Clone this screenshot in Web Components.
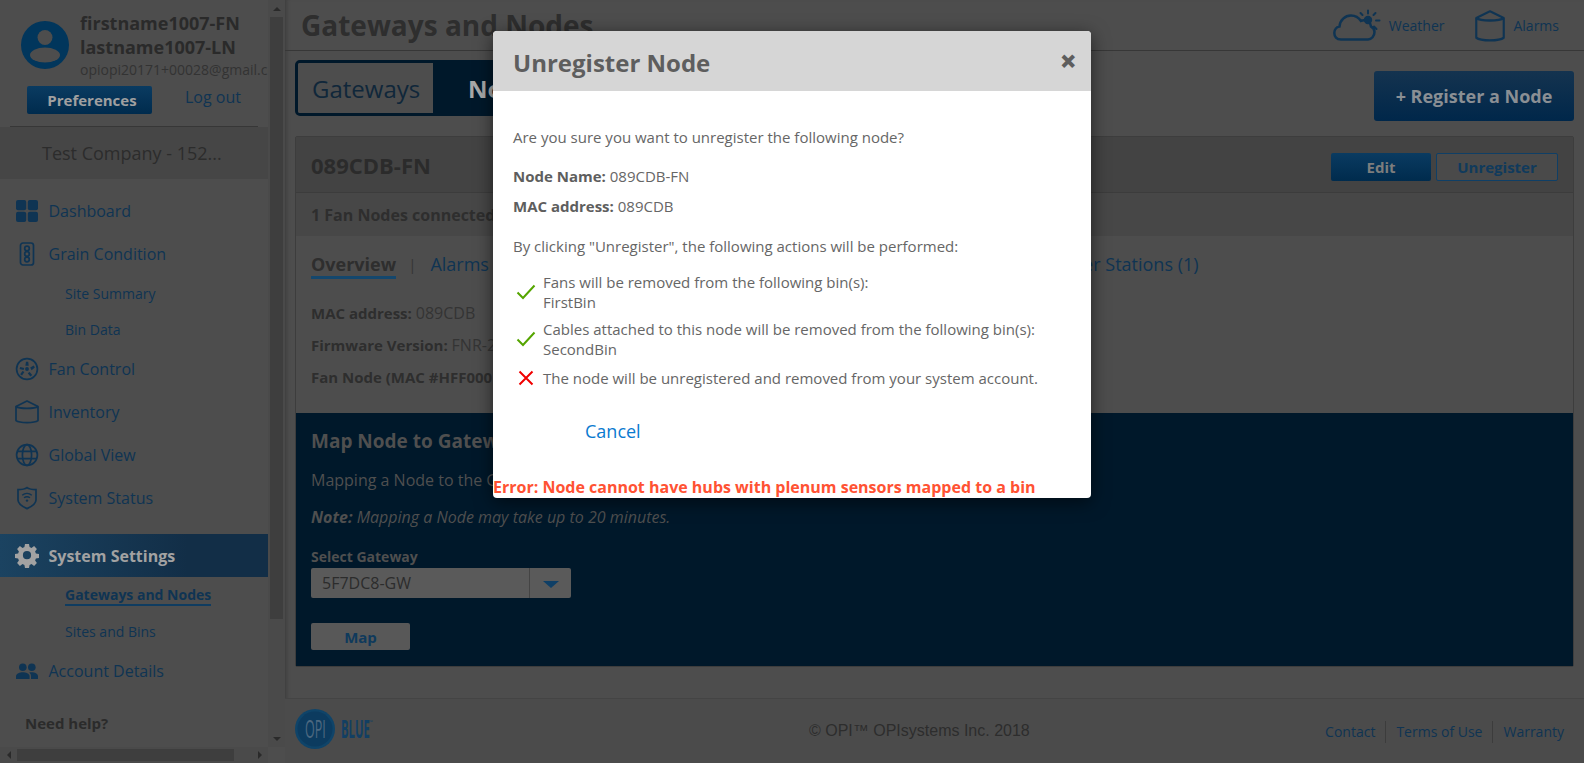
<!DOCTYPE html>
<html>
<head>
<meta charset="utf-8">
<title>Gateways and Nodes</title>
<style>
	html, body { margin: 0; height: 100%; overflow: hidden; background: #4d4d4d; font-family: "Open Sans", "Liberation Sans", sans-serif; }
</style>
</head>
<body>
<page-shell></page-shell>
<script>
const ICONS = {
	dashboard: `<svg width="24" height="24" viewBox="0 0 24 24" fill="currentColor"><rect x="1" y="1" width="10.2" height="10.2" rx="2"/><rect x="12.8" y="1" width="10.2" height="10.2" rx="2"/><rect x="1" y="12.8" width="10.2" height="10.2" rx="2"/><rect x="12.8" y="12.8" width="10.2" height="10.2" rx="2"/></svg>`,
	grain: `<svg width="24" height="24" viewBox="0 0 24 24" fill="none" stroke="currentColor" stroke-width="1.7"><rect x="5.5" y="1" width="13" height="22" rx="2.5"/><circle cx="12" cy="6.5" r="2.3"/><circle cx="12" cy="12" r="2.3"/><circle cx="12" cy="17.5" r="2.3"/></svg>`,
	fan: `<svg width="24" height="24" viewBox="0 0 24 24" fill="currentColor"><circle cx="12" cy="12" r="10.4" fill="none" stroke="currentColor" stroke-width="1.7"/><circle cx="12" cy="12" r="1.9"/><path d="M10.4 8.8 11 4.8h2.2l.5 4zM15.2 10.4l3.6-1.8 1 2-3.2 2.6zM14.6 15l2.6 3.1-1.8 1.3-2.6-3.2zM9.4 15.1l-2.4 3.4-1.8-1.3 2.3-3.3zM8.6 13.1l-4-1 .6-2.1 4 1.1z"/></svg>`,
	bin: `<svg width="24" height="24" viewBox="0 0 24 24" fill="none" stroke="currentColor" stroke-width="1.7" stroke-linejoin="round"><path d="M1 6.500 12 1 23 6.500V20.600C19.500 23.200 4.500 23.200 1 20.600z"/><path d="M1 6.500C4.500 9 19.500 9 23 6.500"/></svg>`,
	globe: `<svg width="24" height="24" viewBox="0 0 24 24" fill="none" stroke="currentColor" stroke-width="1.7"><circle cx="12" cy="12" r="10.4"/><ellipse cx="12" cy="12" rx="4.6" ry="10.4"/><path d="M2.4 8.4h19.2M2.4 15.6h19.2"/></svg>`,
	shield: `<svg width="24" height="24" viewBox="0 0 24 24" fill="none" stroke="currentColor" stroke-width="1.7"><path d="M3 3.6C7 3.6 10 3 12 1.6 14 3 17 3.6 21 3.6V14C21 18 16 20.8 12 22.6 8 20.8 3 18 3 14z"/><path d="M7.2 9.2C10 7 14 7 16.8 9.2M9 11.8c1.8-1.3 4.2-1.3 6 0" stroke-width="1.4"/><circle cx="12" cy="14.6" r="1.2" fill="currentColor" stroke="none"/></svg>`,
	gear: `<svg width="24" height="24" viewBox="0 0 24 24" fill="currentColor"><path fill-rule="evenodd" d="M10 .8h4l.6 3.1 1.9.8 2.6-1.8 2.8 2.8-1.8 2.6.8 1.9 3.1.6v4l-3.1.6-.8 1.9 1.8 2.6-2.8 2.8-2.6-1.8-1.9.8-.6 3.1h-4l-.6-3.1-1.9-.8-2.6 1.8-2.8-2.8 1.8-2.6-.8-1.9-3.1-.6v-4l3.1-.6.8-1.9L2.1 5.700 4.900 2.900l2.600 1.800 1.900-.8zM12 7.900a4.100 4.100 0 1 0 0 8.200 4.100 4.100 0 0 0 0-8.200z" transform="translate(0 -.8)"/></svg>`,
	people: `<svg width="24" height="24" viewBox="0 0 24 24" fill="currentColor"><circle cx="7.800" cy="8.300" r="3.800"/><circle cx="16.800" cy="8.300" r="3.800"/><path d="M1 20v-2.600C1 14.500 5 13.300 7.800 13.300s6.800 1.200 6.800 4.100V20z"/><path d="M16 20v-2.800c0-1.500-.7-2.800-1.800-3.600.9-.2 1.900-.3 2.600-.3 2.800 0 6.200 1.200 6.200 4V20z"/></svg>`
};

class NavItem extends HTMLElement {
	constructor() {
		super();
		this.attachShadow({ mode: 'open' });
		this.shadowRoot.innerHTML = `
			<style>
				:host { display: flex; align-items: center; height: 43px; padding-left: 15px; gap: 9.5px; color: #0f3453; font-size: 16px; white-space: nowrap; }
				:host([active]) { height: 43px; color: #a2a2a2; font-weight: 700; background: linear-gradient(90deg, #1b4361, #122e47 70%); }
				.ico { display: flex; width: 24px; height: 24px; }
			</style>
			<span class="ico">${ICONS[this.getAttribute('icon')] || ''}</span><slot></slot>
		`;
	}
}
customElements.define('nav-item', NavItem);

class NavSub extends HTMLElement {
	constructor() {
		super();
		this.attachShadow({ mode: 'open' });
		this.shadowRoot.innerHTML = `
			<style>
				:host { display: flex; align-items: center; height: 36px; padding-left: 65px; color: #0f3453; font-size: 14px; white-space: nowrap; }
				:host([active]) span { font-weight: 700; border-bottom: 2px solid #0f3c60; line-height: 19px; }
			</style>
			<span><slot></slot></span>
		`;
	}
}
customElements.define('nav-sub', NavSub);

class FakeScroll extends HTMLElement {
	constructor() {
		super();
		this.attachShadow({ mode: 'open' });
		const h = this.hasAttribute('horizontal');
		this.shadowRoot.innerHTML = `
			<style>
				:host { display: flex; flex-direction: ${h ? 'row' : 'column'}; background: #4a4a4a; }
				.btn { flex: none; ${h ? 'width: 17px' : 'height: 17px'}; display: flex; align-items: center; justify-content: center; }
				.track { flex: 1; display: flex; flex-direction: ${h ? 'row' : 'column'}; }
				.thumb { background: #3e3e3e; ${h ? `width: 217px; margin: 2px 0` : `height: 602px; margin: 0 2px 0 2px`}; }
				i { width: 0; height: 0; border: 4px solid transparent; }
				.a { ${h ? 'border-right: 4px solid #2a2a2a; border-left: 0' : 'border-bottom: 4px solid #2a2a2a; border-top: 0'}; }
				.b { ${h ? 'border-left: 4px solid #2a2a2a; border-right: 0' : 'border-top: 4px solid #2a2a2a; border-bottom: 0'}; }
			</style>
			<div class="btn"><i class="a"></i></div>
			<div class="track"><div class="thumb"></div></div>
			<div class="btn"><i class="b"></i></div>
		`;
	}
}
customElements.define('fake-scroll', FakeScroll);

class SideBar extends HTMLElement {
	constructor() {
		super();
		this.attachShadow({ mode: 'open' });
		this.shadowRoot.innerHTML = `
			<style>
				:host { display: grid; grid-template-columns: 268px 17px; grid-template-rows: 1fr 16px; height: 763px; overflow: hidden; color: #2b2b2b; background: #4d4d4d; }
				.content { overflow: hidden; }
				.user { height: 126px; margin: 0 10px; border-bottom: 1px solid #373737; }
				.who { display: flex; padding: 11px 0 0 11px; gap: 11px; }
				.who svg { flex: none; margin-top: 10px; }
				.names { font-size: 18px; font-weight: 700; line-height: 24px; color: #2a2a2a; white-space: nowrap; }
				.mail { font-size: 14px; font-weight: 400; line-height: 20px; color: #333; margin-top: 1px; }
				.acts { display: flex; align-items: center; padding: 6px 0 0 17px; }
				.pref { width: 125px; height: 28px; box-sizing: border-box; padding-left: 5px; border-radius: 2px; background: linear-gradient(#0a3b61, #002b4d); color: #a0a0a0; font-weight: 700; font-size: 15px; display: flex; align-items: center; justify-content: center; }
				.out { color: #0f3453; font-size: 16px; margin: -6px 0 0 33px; }
				.company { height: 52px; background: #464646; display: flex; align-items: center; padding-left: 42px; font-size: 18px; color: #2c2c2c; white-space: nowrap; }
				nav { padding-top: 10px; }
				.gap { height: 15px; }
				.help { font-size: 15px; font-weight: 700; padding: 21px 0 0 25px; color: #2b2b2b; }
				.corner { background: #4d4d4d; }
			</style>
			<div class="content">
				<div class="user">
					<div class="who">
						<svg width="48" height="48" viewBox="0 0 48 48"><circle cx="24" cy="24" r="24" fill="#01365c"/><circle cx="24" cy="16.500" r="7.500" fill="#4d4d4d"/><ellipse cx="24" cy="34" rx="15" ry="7.500" fill="#4d4d4d"/></svg>
						<div class="names">firstname1007-FN<br>lastname1007-LN<div class="mail">opiopi20171+00028@gmail.com</div></div>
					</div>
					<div class="acts"><div class="pref">Preferences</div><div class="out">Log out</div></div>
				</div>
				<div class="company">Test Company - 152...</div>
				<nav>
					<nav-item icon="dashboard">Dashboard</nav-item>
					<nav-item icon="grain">Grain Condition</nav-item>
					<nav-sub>Site Summary</nav-sub>
					<nav-sub>Bin Data</nav-sub>
					<nav-item icon="fan">Fan Control</nav-item>
					<nav-item icon="bin">Inventory</nav-item>
					<nav-item icon="globe">Global View</nav-item>
					<nav-item icon="shield">System Status</nav-item>
					<div class="gap"></div>
					<nav-item icon="gear" active>System Settings</nav-item>
					<nav-sub active>Gateways and Nodes</nav-sub>
					<nav-sub>Sites and Bins</nav-sub>
					<nav-item icon="people">Account Details</nav-item>
					<div class="help">Need help?</div>
				</nav>
			</div>
			<fake-scroll></fake-scroll>
			<fake-scroll horizontal></fake-scroll>
			<div class="corner"></div>
		`;
	}
}
customElements.define('side-bar', SideBar);

class TopBar extends HTMLElement {
	constructor() {
		super();
		this.attachShadow({ mode: 'open' });
		this.shadowRoot.innerHTML = `
			<style>
				:host { display: flex; align-items: center; height: 50px; border-bottom: 1px solid #373737; padding: 0 25px 0 16px; color: #0f3453; }
				h1 { margin: 0 auto 0 0; font-size: 28px; line-height: 50px; font-weight: 700; color: #2e2e2e; }
				.lnk { display: flex; align-items: center; font-size: 14px; white-space: nowrap; }
				.wx { margin-right: 31px; gap: 8px; }
				.al { gap: 8px; }
				.al svg { margin-top: 2px; }
			</style>
			<h1>Gateways and Nodes</h1>
			<div class="lnk wx">
				<svg width="48" height="32" viewBox="0 0 48 32" fill="none" stroke="currentColor" stroke-width="2.500" stroke-linecap="round"><path d="M8 30.500C3.500 30.500 1.300 27.500 1.300 24c0-3.500 2.500-6 5.200-6.500C7 11 12 6.500 18 6.500c4.500 0 8 2.500 10 5.500 1-.5 2-.8 3-.8 4 0 6.500 2.500 7 6.300 2.200 1 3.500 3 3.500 5.500 0 4-3 7.500-6.500 7.500z"/><circle cx="35" cy="11" r="4.200" fill="currentColor" stroke="none"/><path d="M35 1.500v3M27.500 4l2 2M42.500 4l-2 2M43 11.500h3.500M41 17.500l2.500 2.500" stroke-width="2"/></svg>
				<span>Weather</span>
			</div>
			<div class="lnk al">
				<svg width="30" height="32" viewBox="0 0 24 24" preserveAspectRatio="none" fill="none" stroke="currentColor" stroke-width="1.700" stroke-linejoin="round"><path d="M1 6 12 1 23 6V20.800C19.500 23.400 4.500 23.400 1 20.800z"/><path d="M1 6C4.500 8.500 19.500 8.500 23 6"/></svg>
				<span>Alarms</span>
			</div>
		`;
	}
}
customElements.define('top-bar', TopBar);

class NodeCard extends HTMLElement {
	constructor() {
		super();
		this.attachShadow({ mode: 'open' });
		this.shadowRoot.innerHTML = `
			<style>
				:host { display: block; margin-top: 15px; border: 1px solid #3d3d3d; border-radius: 2px; height: 529px; color: #2e2e2e; font-size: 15px; }
				header { height: 55px; display: flex; align-items: center; background: #434343; border-bottom: 1px solid #3c3c3c; padding: 0 15px; }
				h2 { margin: 0 auto 0 0; font-size: 22px; font-weight: 700; color: #2b2b2b; }
				.btn { height: 28px; margin-top: 4px; box-sizing: border-box; border-radius: 2px; display: flex; align-items: center; justify-content: center; font-weight: 700; font-size: 15px; }
				.edit { width: 100px; background: linear-gradient(#0a3b61, #002b4d); color: #7d7d7d; margin-right: 5px; }
				.unreg { width: 122px; border: 1px solid #0f3f66; color: #103a5c; background: #4a4a4a; }
				.sub { height: 43px; display: flex; align-items: center; background: #474747; padding-left: 15px; font-weight: 700; font-size: 16px; }
				.tabs { display: flex; align-items: center; height: 59px; padding-left: 15px; color: #0f3453; font-size: 18px; white-space: nowrap; }
				.ov { font-weight: 700; color: #2e2e2e; border-bottom: 3px solid #14476d; line-height: 24px; margin-top: -1px; }
				.sep { color: #353535; margin: -3px 14px 0 12px; font-size: 15px; }
				.al { margin-top: -4px; }
				.push { margin-left: 540px; margin-top: -4px; }
				.info { padding: 2px 15px 0; }
				.info div { height: 32px; line-height: 32px; white-space: nowrap; }
				b { font-weight: 700; }
				.info span { color: #343434; font-size: 16px; }
				map-panel { margin-top: 20px; }
			</style>
			<header><h2>089CDB-FN</h2><div class="btn edit">Edit</div><div class="btn unreg">Unregister</div></header>
			<div class="sub">1 Fan Nodes connected</div>
			<div class="tabs"><span class="ov">Overview</span><span class="sep">|</span><span class="al">Alarms</span><span class="push">Weather Stations (1)</span></div>
			<div class="info">
				<div><b>MAC address:</b> <span>089CDB</span></div>
				<div><b>Firmware Version:</b> <span>FNR-2</span></div>
				<div><b>Fan Node (MAC #HFF000</b></div>
			</div>
			<map-panel></map-panel>
		`;
	}
}
customElements.define('node-card', NodeCard);

class MapPanel extends HTMLElement {
	constructor() {
		super();
		this.attachShadow({ mode: 'open' });
		this.shadowRoot.innerHTML = `
			<style>
				:host { display: block; height: 253px; background: #00182a; padding: 14px 15px 0; box-sizing: border-box; color: #4f4f4f; font-size: 16px; white-space: nowrap; overflow: hidden; }
				h3 { margin: 0; font-size: 19px; line-height: 28px; font-weight: 700; color: #4f4f4f; }
				p { margin: 0; line-height: 22px; }
				.m1 { margin-top: 14px; }
				.m2 { margin-top: 15px; font-style: italic; }
				label { display: block; margin-top: 19px; font-size: 14px; line-height: 20px; font-weight: 700; }
				.sel { display: flex; width: 260px; height: 30px; background: #5a5a5a; border-radius: 2px; align-items: center; color: #2c2c2c; box-sizing: border-box; margin-top: 1px; font-size: 16px; }
				.sel span { flex: 1; padding-left: 11px; }
				.sel i { width: 41px; height: 30px; border-left: 1px solid #444; display: flex; align-items: center; justify-content: center; }
				.sel i::after { content: ''; border: 8px solid transparent; border-top: 7px solid #0f3f66; border-bottom: 0; margin-top: 2px; }
				.map { margin-top: 25px; width: 99px; height: 27px; background: #585858; border-radius: 2px; display: flex; align-items: center; justify-content: center; color: #0f3a5c; font-weight: 700; font-size: 15px; }
			</style>
			<h3>Map Node to Gateway</h3>
			<p class="m1">Mapping a Node to the G</p>
			<p class="m2"><b>Note:</b> Mapping a Node may take up to 20 minutes.</p>
			<label>Select Gateway</label>
			<div class="sel"><span>5F7DC8-GW</span><i></i></div>
			<div class="map">Map</div>
		`;
	}
}
customElements.define('map-panel', MapPanel);

class PageFooter extends HTMLElement {
	constructor() {
		super();
		this.attachShadow({ mode: 'open' });
		this.shadowRoot.innerHTML = `
			<style>
				:host { display: flex; align-items: center; height: 64px; border-top: 1px solid #444; margin-top: auto; padding: 0 20px 0 10px; background: #4b4b4b; position: relative; }
				.logo { display: flex; margin: -4px auto 0 0; }
				.copy { position: absolute; left: 524px; top: 0; line-height: 64px; font-family: "Liberation Sans", Arial, sans-serif; font-size: 16px; color: #2d2d2d; white-space: nowrap; }
				.links { display: flex; align-items: center; font-size: 14px; color: #0f3453; padding-top: 2px; }
				.links span { padding: 1px 10px; border-left: 1px solid #3c3c3c; line-height: 20px; }
				.links span:first-child { border-left: 0; }
				.links span:last-child { padding-right: 0; }
			</style>
			<div class="logo">
				<svg width="90" height="40" viewBox="0 0 90 40">
					<circle cx="20" cy="20" r="20" fill="#0f4469"/>
					<circle cx="20" cy="20" r="17.500" fill="#0c3b5f"/>
					<text transform="translate(10 29) scale(.48 1)" font-family="Open Sans" font-size="26" fill="#4c6880">OPI</text>
					<text transform="translate(46 29) scale(.45 1)" font-family="Open Sans" font-size="25" font-weight="700" fill="#123f63">BLUE</text>
					<text x="74" y="15" font-family="Open Sans" font-size="5" fill="#123f63">™</text>
				</svg>
			</div>
			<div class="copy">© OPI™ OPIsystems Inc. 2018</div>
			<div class="links"><span>Contact</span><span>Terms of Use</span><span>Warranty</span></div>
		`;
	}
}
customElements.define('page-footer', PageFooter);

class ActionRow extends HTMLElement {
	constructor() {
		super();
		this.attachShadow({ mode: 'open' });
		const ok = this.getAttribute('kind') === 'ok';
		this.shadowRoot.innerHTML = `
			<style>
				:host { display: flex; align-items: center; line-height: 20px; }
				.ic { flex: none; width: 27px; padding-left: 3px; display: flex; }
			</style>
			<span class="ic">${ok
				? `<svg width="20" height="16" viewBox="0 0 20 16" fill="none" stroke="#55a500" stroke-width="2"><path d="M1.500 8.500 7 14 18.500 1.500"/></svg>`
				: `<svg width="16" height="16" viewBox="0 0 16 16" fill="none" stroke="#f00000" stroke-width="2" style="margin-left:2px"><path d="M1.500 1.500 14.500 14.500M14.500 1.500 1.500 14.500"/></svg>`}</span>
			<div><slot></slot></div>
		`;
	}
}
customElements.define('action-row', ActionRow);

class ModalDialog extends HTMLElement {
	constructor() {
		super();
		this.attachShadow({ mode: 'open' });
		this.shadowRoot.innerHTML = `
			<style>
				:host { display: block; position: absolute; left: 493px; top: 31px; width: 598px; height: 467px; background: #fff; border-radius: 4px; overflow: hidden; box-shadow: 0 4px 18px rgba(0,0,0,.55); color: #666; font-size: 15px; }
				header { height: 60px; background: #d6d6d6; display: flex; align-items: center; justify-content: space-between; padding: 0 14px 0 20px; }
				h2 { margin: 2px 0 0; font-size: 24px; font-weight: 700; color: #5e5e5e; }
				.x { font-size: 30px; font-weight: 800; color: #5e5e5e; line-height: 30px; margin-top: -1px; }
				.body { padding: 36px 0 0 20px; }
				p { margin: 0; line-height: 20px; }
				b { font-weight: 700; color: #5e5e5e; }
				.p2 { margin-top: 19px; }
				.p3 { margin-top: 10px; }
				.p4 { margin-top: 20px; }
				.rows { margin-top: 16px; }
				action-row + action-row { margin-top: 7px; }
				action-row[kind=no] { margin-top: 9px; }
				.cancel { margin: 31px 0 0 72px; color: #0a7ad0; font-size: 18px; line-height: 24px; }
				.err { margin-top: 33px; color: #ff5233; font-size: 16px; font-weight: 700; line-height: 22px; white-space: nowrap; }
			</style>
			<header><h2>Unregister Node</h2><span class="x">×</span></header>
			<div class="body">
				<p>Are you sure you want to unregister the following node?</p>
				<p class="p2"><b>Node Name:</b> 089CDB-FN</p>
				<p class="p3"><b>MAC address:</b> 089CDB</p>
				<p class="p4">By clicking "Unregister", the following actions will be performed:</p>
				<div class="rows">
					<action-row kind="ok">Fans will be removed from the following bin(s):<br>FirstBin</action-row>
					<action-row kind="ok">Cables attached to this node will be removed from the following bin(s):<br>SecondBin</action-row>
					<action-row kind="no">The node will be unregistered and removed from your system account.</action-row>
				</div>
				<div class="cancel">Cancel</div>
			</div>
			<div class="err">Error: Node cannot have hubs with plenum sensors mapped to a bin</div>
		`;
	}
}
customElements.define('modal-dialog', ModalDialog);

class PageShell extends HTMLElement {
	constructor() {
		super();
		this.attachShadow({ mode: 'open' });
		this.shadowRoot.innerHTML = `
			<style>
				:host { display: grid; grid-template-columns: 285px 1fr; height: 763px; position: relative; overflow: hidden; background: #4d4d4d; }
				main { display: flex; flex-direction: column; height: 763px; min-width: 0; box-shadow: inset 4px 0 4px -3px #3a3a3a; }
				.wrap { padding: 0 10px 0 10px; }
				.row { display: flex; justify-content: space-between; align-items: flex-start; padding-top: 9px; }
				.seg { display: flex; height: 56px; width: 280px; border-radius: 5px; border: 3px solid #00182a; box-sizing: border-box; overflow: hidden; font-size: 24px; }
				.seg span { display: flex; align-items: center; }
				.g { width: 135px; padding-left: 14px; box-sizing: border-box; background: #4d4d4d; color: #10273a; }
				.n { flex: 1; background: #00182a; color: #a8a8a8; font-weight: 700; padding-left: 35px; }
				.reg { width: 200px; height: 50px; margin-top: 11px; border-radius: 3px; background: linear-gradient(#14334f, #00274a); color: #8a8f94; font-weight: 700; font-size: 18px; display: flex; align-items: center; justify-content: center; }
			</style>
			<side-bar></side-bar>
			<main>
				<top-bar></top-bar>
				<div class="wrap">
					<div class="row">
						<div class="seg"><span class="g">Gateways</span><span class="n">Nodes</span></div>
						<div class="reg">+ Register a Node</div>
					</div>
					<node-card></node-card>
				</div>
				<page-footer></page-footer>
			</main>
			<modal-dialog></modal-dialog>
		`;
	}
}
customElements.define('page-shell', PageShell);
</script>
</body>
</html>
